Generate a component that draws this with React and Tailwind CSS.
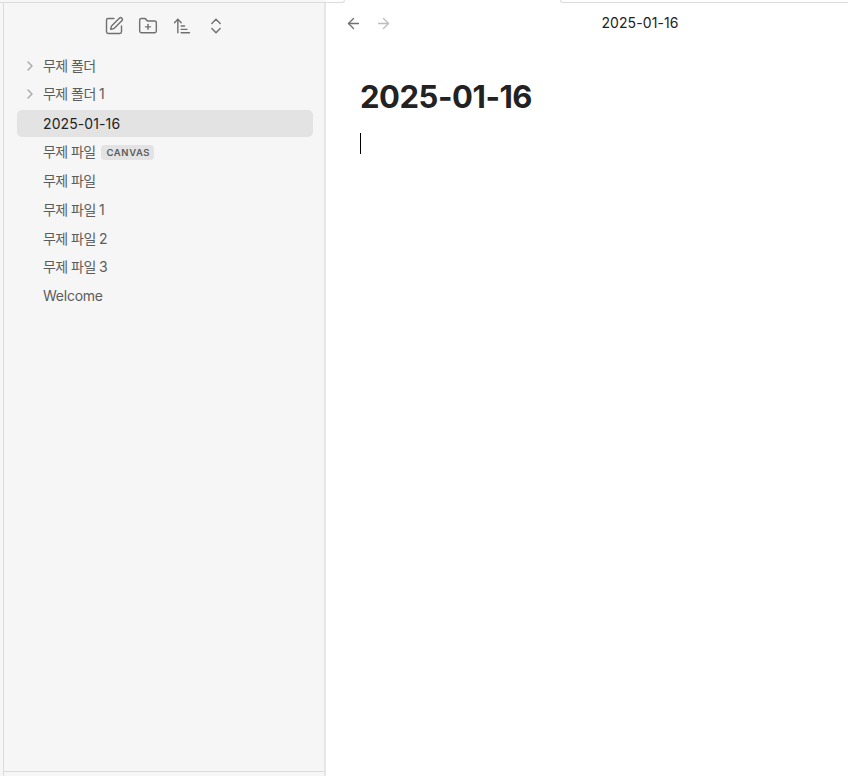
import React from 'react';
import { SquarePen, FolderPlus, ArrowUpNarrowWide, ChevronsUpDown, ChevronRight, ArrowLeft, ArrowRight } from 'lucide-react';

const files = [
    { name: '무제 폴더', folder: true, spacing: 'tracking-[-0.6px]' },
    { name: '무제 폴더 1', folder: true, spacing: 'tracking-[-0.55px]' },
    { name: '2025-01-16', active: true, spacing: 'tracking-[0.1px]' },
    { name: '무제 파일', tag: 'CANVAS', spacing: 'tracking-[-0.6px]' },
    { name: '무제 파일', spacing: 'tracking-[-0.6px]' },
    { name: '무제 파일 1', spacing: 'tracking-[-0.55px]' },
    { name: '무제 파일 2', spacing: 'tracking-[-0.55px]' },
    { name: '무제 파일 3', spacing: 'tracking-[-0.55px]' },
    { name: 'Welcome', spacing: 'tracking-[-0.25px]' },
];

const FileRow = ({ file }) => (
    <div
        className={`flex items-center h-[27px] mb-[1.85px] rounded-[5px] text-[14px] whitespace-nowrap ${file.active ? 'bg-[#e3e3e3] text-[#222222]' : 'text-[#5c5c5c]'}`}
    >
        <div className="w-[26px] pl-[5px] shrink-0">
            {file.folder && <ChevronRight className="w-4 h-4 text-[#ababab]" strokeWidth={2.2} />}
        </div>
        <span className={`${file.spacing} ${file.active ? '' : 'pb-px'}`}>{file.name}</span>
        {file.tag && (
            <span className="ml-[6px] h-[15px] pl-[5px] pr-[4px] rounded-[4px] bg-[#e3e3e3] text-[9.5px] leading-[15px] font-semibold tracking-[0.6px]">
                {file.tag}
            </span>
        )}
    </div>
);

const Sidebar = () => (
    <aside className="flex flex-col w-[323px] ml-[3px] shrink-0 bg-[#f6f6f6] border-l border-l-[#dcdcdc] border-r-2 border-r-[#e6e6e6]">
        <div className="flex justify-center gap-[14px] pt-[13px] pl-[2px] h-[48px] text-[#707070]">
            <SquarePen className="w-5 h-5" strokeWidth={1.7} />
            <FolderPlus className="w-5 h-5" strokeWidth={1.7} />
            <ArrowUpNarrowWide className="w-5 h-5" strokeWidth={1.7} />
            <ChevronsUpDown className="w-5 h-5" strokeWidth={1.7} />
        </div>
        <div className="flex-1 pl-[13px] pr-[11px] pt-[1px]">
            {files.map((file, i) => (
                <FileRow key={i} file={file} />
            ))}
        </div>
        <div className="h-[5px] border-t border-[#dcdcdc]" />
    </aside>
);

const Editor = () => (
    <main className="flex-1 min-w-0 bg-white">
        <div className="flex items-center h-[40px] pl-[19px]">
            <ArrowLeft className="w-[17px] h-[17px] text-[#707070]" strokeWidth={1.9} />
            <ArrowRight className="w-[17px] h-[17px] ml-[13px] text-[#bdbdbd]" strokeWidth={1.9} />
            <div className="flex-1 text-center pb-px pr-[14px] pl-[54px] text-[14px] tracking-[0.1px] text-[#222222]">2025-01-16</div>
        </div>
        <div className="pl-[34px] pt-[34px]">
            <h1 className="text-[31px] leading-[40px] font-bold tracking-[-0.45px] text-[#222222]">2025-01-16</h1>
            <div className="mt-[16px] w-px h-[21px] bg-black" />
        </div>
    </main>
);

const App = () => (
    <div className="flex flex-col w-[848px] h-[776px] overflow-hidden bg-white font-['Inter','Noto_Sans_CJK_KR',sans-serif]">
        {/* Bottom edge of the tab strip, open under the active tab */}
        <div className="flex justify-between h-[3px] shrink-0">
            <div className="flex w-[345px] border-b border-r border-[#dcdcdc] rounded-br-[4px] overflow-hidden">
                <div className="w-[326px] bg-[#f6f6f6]" />
            </div>
            <div className="w-[288px] border-b border-l border-[#dcdcdc] rounded-bl-[4px]" />
        </div>
        <div className="flex flex-1 min-h-0">
            <div className="w-[3px] -mr-[3px] bg-[#f6f6f6]" />
            <Sidebar />
            <Editor />
        </div>
    </div>
);

export default App;
